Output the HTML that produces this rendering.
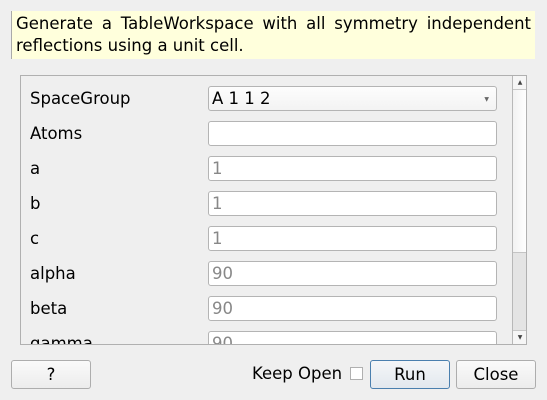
<!DOCTYPE html>
<html><head><style>
body{margin:0;width:547px;height:400px;background:#efefef;font-family:"DejaVu Sans","Liberation Sans",sans-serif;font-size:16.5px;color:#000;position:relative;overflow:hidden}
.abs{position:absolute}
.tip{left:11px;top:11px;width:524px;height:48px;background:#ffffdc;border-left:1px solid #aaa;box-sizing:border-box;padding:2px 4px;line-height:22px;font-size:16.5px;text-align:justify;text-align-last:left}
.area{left:20px;top:75px;width:507px;height:270px;border:1px solid #b0b0b0;box-sizing:border-box;overflow:hidden;background:#efefef}
.lbl{left:9px;font-size:16.5px}
.fld{left:187px;width:289px;height:25px;background:#fff;border:1px solid #b4b4b4;border-radius:3px;box-sizing:border-box;padding-left:3px;line-height:23px;color:#888}
.sb{left:491px;top:0;width:15px;height:268px;border-left:1px solid #b8b8b8;background:#e4e4e4}
.btn{height:29px;border:1px solid #adadad;border-radius:3px;box-sizing:border-box;background:linear-gradient(#fafafa,#ececec);text-align:center;line-height:27px;font-size:16.5px}
</style></head><body>
<div class="abs tip">Generate a TableWorkspace with all symmetry independent reflections using a unit cell.</div>
<div class="abs area">
 <div class="abs lbl" style="top:13px">SpaceGroup</div>
 <div class="abs fld" style="top:10px;color:#000;background:linear-gradient(#fdfdfd,#f3f3f3)">A 1 1 2<span class="abs" style="right:7px;top:1px;font-size:6px;color:#666">▼</span></div>
 <div class="abs lbl" style="top:48px">Atoms</div><div class="abs fld" style="top:45px"></div>
 <div class="abs lbl" style="top:83px">a</div><div class="abs fld" style="top:80px">1</div>
 <div class="abs lbl" style="top:118px">b</div><div class="abs fld" style="top:115px">1</div>
 <div class="abs lbl" style="top:153px">c</div><div class="abs fld" style="top:150px">1</div>
 <div class="abs lbl" style="top:188px">alpha</div><div class="abs fld" style="top:185px">90</div>
 <div class="abs lbl" style="top:223px">beta</div><div class="abs fld" style="top:220px">90</div>
 <div class="abs lbl" style="top:258px">gamma</div><div class="abs fld" style="top:255px">90</div>
 <div class="abs sb">
  <div class="abs" style="left:0;top:0;width:14px;height:13px;border-bottom:1px solid #c8c8c8;background:#f6f6f6;font-size:6px;text-align:center;line-height:13px;color:#444">▲</div>
  <div class="abs" style="left:0;top:14px;width:14px;height:162px;background:linear-gradient(90deg,#f2f2f2,#fff);border-bottom:1px solid #c4c4c4"></div>
  <div class="abs" style="left:0;top:254px;width:14px;height:14px;border-top:1px solid #c8c8c8;background:#f6f6f6;font-size:6px;text-align:center;line-height:13px;color:#444">▼</div>
 </div>
</div>
<div class="abs btn" style="left:11px;top:360px;width:80px">?</div>
<div class="abs" style="left:252px;top:364px">Keep Open</div>
<div class="abs" style="left:350px;top:367px;width:13px;height:13px;background:#fff;border:1px solid #b0b0b0;box-sizing:border-box"></div>
<div class="abs btn" style="left:370px;top:360px;width:80px;border-color:#4a7fae;background:linear-gradient(#f4f6f8,#e2e8ee)">Run</div>
<div class="abs btn" style="left:456px;top:360px;width:80px">Close</div>
</body></html>
